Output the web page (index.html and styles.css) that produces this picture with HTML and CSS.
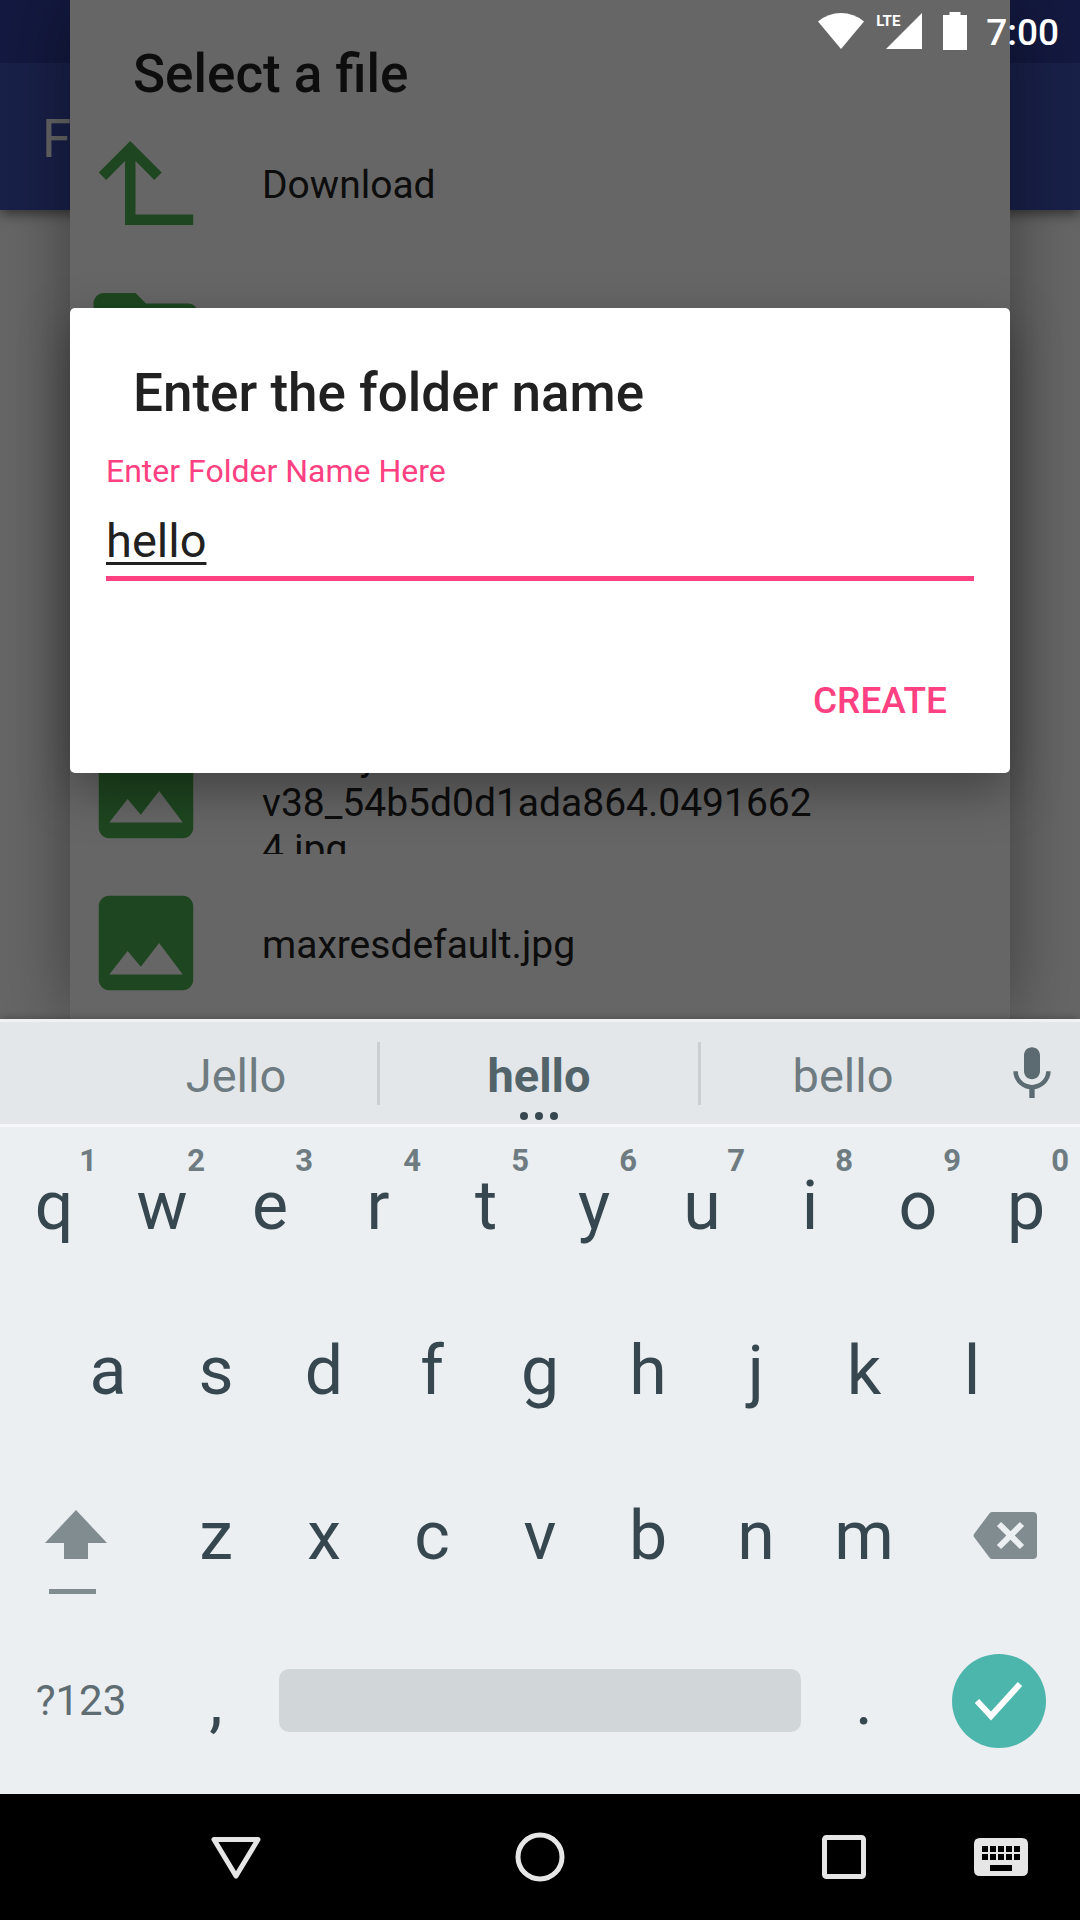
FILE: index.html
```html
<!DOCTYPE html>
<html lang="en">
<head>
<meta charset="utf-8">
<meta name="viewport" content="width=device-width, initial-scale=1">
<title>Enter the folder name</title>
<link rel="stylesheet" href="styles.css">
</head>
<body>
<svg class="defs" aria-hidden="true">
  <symbol id="icon-up" viewBox="0 0 24 24"><path d="M9 4l6 6-1.42 1.42L10 7.83V18h11v2H8V7.83l-3.58 3.59L3 10z"/></symbol>
  <symbol id="icon-folder" viewBox="0 0 24 24"><path d="M10 4H4c-1.1 0-2 .9-2 2v12c0 1.1.9 2 2 2h16c1.1 0 2-.9 2-2V8c0-1.1-.9-2-2-2h-8z"/></symbol>
  <symbol id="icon-image" viewBox="0 0 24 24"><path d="M21 19V5c0-1.1-.9-2-2-2H5c-1.1 0-2 .9-2 2v14c0 1.1.9 2 2 2h14c1.1 0 2-.9 2-2zM8.5 13.5l2.5 3.01L14.5 12l4.5 6H5z"/></symbol>
</svg>

<main class="stage">
  <div class="app-bar">F</div>

  <section class="file-dialog">
    <h2 class="dialog-title">Select a file</h2>
    <ul class="file-list">
      <li class="file-row"><svg class="file-icon"><use href="#icon-up"/></svg><span class="file-name single">Download</span></li>
      <li class="file-row"><svg class="file-icon"><use href="#icon-folder"/></svg></li>
      <li class="file-row"><svg class="file-icon"><use href="#icon-folder"/></svg></li>
      <li class="file-row"><svg class="file-icon"><use href="#icon-folder"/></svg></li>
      <li class="file-row"><svg class="file-icon"><use href="#icon-image"/></svg><span class="file-name">Infinity-v38_54b5d0d1ada864.04916624.jpg</span></li>
      <li class="file-row"><svg class="file-icon"><use href="#icon-image"/></svg><span class="file-name single">maxresdefault.jpg</span></li>
    </ul>
  </section>

  <div class="scrim">
    <form class="folder-dialog" onsubmit="return false">
      <h2 class="dialog-title">Enter the folder name</h2>
      <div class="field">
        <label class="field-label" for="folder-name">Enter Folder Name Here</label>
        <input class="field-input" id="folder-name" type="text" value="hello" autocomplete="off" spellcheck="false">
      </div>
      <div class="actions"><button class="create" type="submit">CREATE</button></div>
    </form>
  </div>

  <header class="status-bar">
    <svg class="wifi" viewBox="0 0 46 36"><path d="M0 8.500Q10 0 23 0T46 8.500L23 36z"/></svg>
    <div class="cell">
      <svg class="cell-icon" viewBox="0 0 36 36"><path d="M36 0v36H0z"/></svg>
      <span class="lte">LTE</span>
    </div>
    <svg class="battery" viewBox="0 0 24 38"><path d="M6.500 0h11v3H24v35H0V3h6.500z"/></svg>
    <time class="clock">7:00</time>
  </header>
</main>

<section class="keyboard">
  <div class="suggestions">
    <button class="suggestion">Jello</button>
    <button class="suggestion best">hello<svg class="dots" viewBox="0 0 38 8"><circle cx="4" cy="4" r="4"/><circle cx="19" cy="4" r="4"/><circle cx="34" cy="4" r="4"/></svg></button>
    <button class="suggestion">bello</button>
    <button class="mic" aria-label="Voice input"><svg viewBox="0 0 24 24"><path d="M12 14c1.66 0 3-1.34 3-3V5c0-1.66-1.34-3-3-3S9 3.340 9 5v6c0 1.660 1.340 3 3 3zm5.300-3c0 3-2.540 5.100-5.300 5.100S6.700 14 6.700 11H5c0 3.410 2.720 6.230 6 6.720V21h2v-3.280c3.280-.48 6-3.300 6-6.720h-1.700z"/></svg></button>
  </div>
  <div class="keys">
    <div class="key-row top">
      <button class="key">q<span class="hint">1</span></button>
      <button class="key">w<span class="hint">2</span></button>
      <button class="key">e<span class="hint">3</span></button>
      <button class="key">r<span class="hint">4</span></button>
      <button class="key">t<span class="hint">5</span></button>
      <button class="key">y<span class="hint">6</span></button>
      <button class="key">u<span class="hint">7</span></button>
      <button class="key">i<span class="hint">8</span></button>
      <button class="key">o<span class="hint">9</span></button>
      <button class="key">p<span class="hint">0</span></button>
    </div>
    <div class="key-row middle">
      <button class="key">a</button>
      <button class="key">s</button>
      <button class="key">d</button>
      <button class="key">f</button>
      <button class="key">g</button>
      <button class="key">h</button>
      <button class="key">j</button>
      <button class="key">k</button>
      <button class="key">l</button>
    </div>
    <div class="key-row lower">
      <button class="key wide shift" aria-label="Shift"><svg viewBox="0 0 64 120"><path d="M32 34l31 33H44v16H20V67H1zM5 113h47v5H5z"/></svg></button>
      <button class="key">z</button>
      <button class="key">x</button>
      <button class="key">c</button>
      <button class="key">v</button>
      <button class="key">b</button>
      <button class="key">n</button>
      <button class="key">m</button>
      <button class="key wide delete" aria-label="Delete"><svg viewBox="0 0 64 48"><path d="M19 0h41q4 0 4 4v39q0 4-4 4H19q-2 0-3-2L1 25q-1-1 0-3L16 2q1-2 3-2z"/><path class="cross" d="M26 12l23 23M49 12L26 35"/></svg></button>
    </div>
    <div class="key-row bottom">
      <button class="key wide symbols">?123</button>
      <button class="key">,</button>
      <button class="key space" aria-label="Space"><span class="space-bar"></span></button>
      <button class="key">.</button>
      <button class="key wide" aria-label="Done"><svg class="done" viewBox="0 0 94 94"><circle cx="47" cy="47" r="47"/><path d="M25 47l14 15 29-32"/></svg></button>
    </div>
  </div>
</section>

<nav class="nav-bar">
  <button class="nav-key back" aria-label="Back"><svg width="50" height="50" viewBox="0 0 50 50"><path d="M3 7.500h44L25 44z"/></svg></button>
  <button class="nav-key home" aria-label="Home"><svg width="50" height="50" viewBox="0 0 50 50"><circle cx="25" cy="25" r="22"/></svg></button>
  <button class="nav-key recents" aria-label="Recent apps"><svg width="50" height="50" viewBox="0 0 50 50"><rect x="5.500" y="5.500" width="39" height="39" rx="2"/></svg></button>
  <button class="nav-key switcher" aria-label="Choose keyboard"><svg width="54" height="38" viewBox="0 0 54 38"><path fill-rule="evenodd" d="M6 0h42q6 0 6 6v26q0 6-6 6H6q-6 0-6-6V6q0-6 6-6zM8 8v6h6V8zm8 0v6h6V8zm8 0v6h6V8zm8 0v6h6V8zm8 0v6h6V8zM8 16v6h6v-6zm8 0v6h6v-6zm8 0v6h6v-6zm8 0v6h6v-6zm8 0v6h6v-6zM16 27v6h22v-6z"/></svg></button>
</nav>
</body>
</html>
```

FILE: styles.css
```css
* { box-sizing: border-box; }

body {
  margin: 0;
  min-height: 100vh;
  display: flex;
  flex-direction: column;
  background: #fff;
  color: #212121;
  font-family: Roboto, "Noto Sans", sans-serif;
}

button {
  margin: 0;
  padding: 0;
  border: 0;
  background: none;
  color: inherit;
  font: inherit;
}

svg { display: block; fill: currentColor; }
.defs { position: absolute; width: 0; height: 0; }

/* App and dialogs */
.stage {
  flex: 1;
  min-height: 840px;
  position: relative;
  overflow: hidden;
}

.app-bar {
  height: 210px;
  padding: 107px 42px 0;
  background: linear-gradient(#303f9f 63px, #3f51b5 63px);
  box-shadow: 0 4px 12px rgba(0, 0, 0, .5);
  color: #fff;
  font-size: 53px;
  line-height: 64px;
}

.file-dialog {
  position: absolute;
  inset: 0 70px;
  background: #fff;
  box-shadow: 0 0 70px rgba(0, 0, 0, .4);
}

.dialog-title {
  margin: 0;
  padding: 42px 63px 0;
  font-size: 53px;
  font-weight: 500;
  line-height: 64px;
}

.file-list { margin: 0; padding: 1px 13px 0; list-style: none; }

.file-row {
  height: 152px;
  display: flex;
  align-items: center;
  gap: 53px;
}

.file-icon {
  flex: none;
  width: 126px;
  height: 126px;
  color: #4caf50;
}

.file-name {
  width: 562px;
  height: 126px;
  padding-top: 6px;
  overflow: hidden;
  overflow-wrap: anywhere;
  font-size: 39px;
  line-height: 46px;
}

.file-name.single { height: auto; padding: 4px 0 0; }

.scrim {
  position: absolute;
  inset: 0;
  padding: 62px 70px 0;
  display: flex;
  flex-direction: column;
  justify-content: center;
  background: rgba(0, 0, 0, .6);
}

.folder-dialog {
  background: #fff;
  border-radius: 5px;
  box-shadow: 0 18px 50px rgba(0, 0, 0, .35);
}

.folder-dialog .dialog-title { padding-top: 53px; }

.field {
  display: flex;
  flex-direction: column;
  padding: 27px 36px 0;
}

.field-label {
  color: #ff4081;
  font-size: 32px;
  line-height: 38px;
}

.field-input {
  height: 91px;
  margin: 0;
  padding: 22px 0 8px;
  border: 0;
  border-bottom: 5px solid #ff4081;
  border-radius: 0;
  outline: 0;
  background: none;
  color: #212121;
  font: 400 47px/56px Roboto, "Noto Sans", sans-serif;
  text-decoration: underline 3px;
  text-underline-offset: 5px;
}

.actions {
  display: flex;
  justify-content: flex-end;
  padding: 72px 42px 26px;
}

.create {
  height: 94px;
  padding: 0 21px;
  color: #ff4081;
  font-size: 37px;
  font-weight: 500;
}

.status-bar {
  position: absolute;
  inset: 0 0 auto;
  height: 63px;
  padding: 3px 21px 0 0;
  display: flex;
  justify-content: flex-end;
  align-items: center;
  color: #fff;
}

.wifi { width: 46px; height: 36px; margin: 0 12px 4px 0; }
.cell { position: relative; padding-left: 10px; margin: 0 21px 4px 0; }
.cell-icon { width: 36px; height: 36px; }
.lte { position: absolute; left: 0; top: 0; font-size: 15px; font-weight: 700; line-height: 16px; }
.battery { width: 24px; height: 38px; margin: 0 19px 4px 0; }
.clock { font-size: 37px; font-weight: 500; line-height: 44px; }

/* Keyboard */
.keyboard {
  position: relative;
  background: #ebeff2;
  color: #37474f;
  box-shadow: 0 0 8px rgba(0, 0, 0, .3);
}

.suggestions {
  display: grid;
  grid-template-columns: 282fr 324fr 284fr 95px;
  height: 105px;
  padding-left: 95px;
  border-top: 3px solid #eff1f3;
  background: #e3e7ea;
}

.suggestion {
  position: relative;
  padding-top: 4px;
  color: #6e7b80;
  font-size: 47px;
}

.suggestion.best {
  color: #52636a;
  font-weight: 700;
}

.suggestion.best::before,
.suggestion.best::after {
  content: "";
  position: absolute;
  top: 20px;
  left: 0;
  width: 3px;
  height: 63px;
  background: #cacfd2;
}

.suggestion.best::after { left: auto; right: 0; }

.dots {
  position: absolute;
  left: 50%;
  bottom: 4px;
  width: 38px;
  height: 8px;
  margin-left: -19px;
  color: #37474f;
}

.mic { display: grid; place-items: center; padding: 2px 2px 0 0; color: #5c6a71; }
.mic svg { width: 64px; height: 64px; }

.keys {
  padding-bottom: 10px;
  box-shadow: inset 0 3px #f5f7f8;
}

.key-row {
  display: grid;
  height: 165px;
  padding-bottom: 2px;
}

.key-row.top { grid-template-columns: repeat(10, 1fr); }

.key-row.middle {
  grid-template-columns: repeat(9, 1fr);
  padding-left: 5%;
  padding-right: 5%;
}

.key-row.lower { grid-template-columns: 3fr repeat(7, 2fr) 3fr; }
.key-row.bottom { grid-template-columns: 3fr 2fr 10fr 2fr 3fr; }

.key {
  position: relative;
  min-width: 0;
  font-size: 68px;
}

.key.wide { display: grid; place-items: center; }
.key.space { padding: 0 9px; }

.hint {
  position: absolute;
  right: 11px;
  top: 19px;
  color: #6e7b80;
  font-size: 31px;
  font-weight: 700;
  line-height: 36px;
}

.key.shift { padding-right: 11px; color: #818c90; }
.shift svg { width: 64px; height: 120px; }
.key.delete { padding-left: 11px; color: #818c90; }
.delete svg { width: 64px; height: 48px; }
.cross { fill: none; stroke: #ebeff2; stroke-width: 6; }
.key.symbols { color: #5f6d73; font-size: 42px; }

.space-bar {
  display: block;
  height: 63px;
  border-radius: 10px;
  background: #d1d6d9;
}

.done { width: 94px; height: 94px; color: #4db6ac; }
.done path { fill: none; stroke: #fff; stroke-width: 6; }

/* System navigation */
.nav-bar {
  display: grid;
  grid-template-columns: 158fr 156fr 148fr 156fr 148fr 156fr 158fr;
  height: 126px;
  background: #000;
  color: #e6e6e6;
}

.nav-key { display: grid; place-items: center; }
.back { grid-column: 2; }
.home { grid-column: 4; }
.recents { grid-column: 6; }
.switcher { grid-column: 7; }

.back svg, .home svg, .recents svg {
  fill: none;
  stroke: currentColor;
  stroke-width: 5;
  stroke-linejoin: round;
}
```
